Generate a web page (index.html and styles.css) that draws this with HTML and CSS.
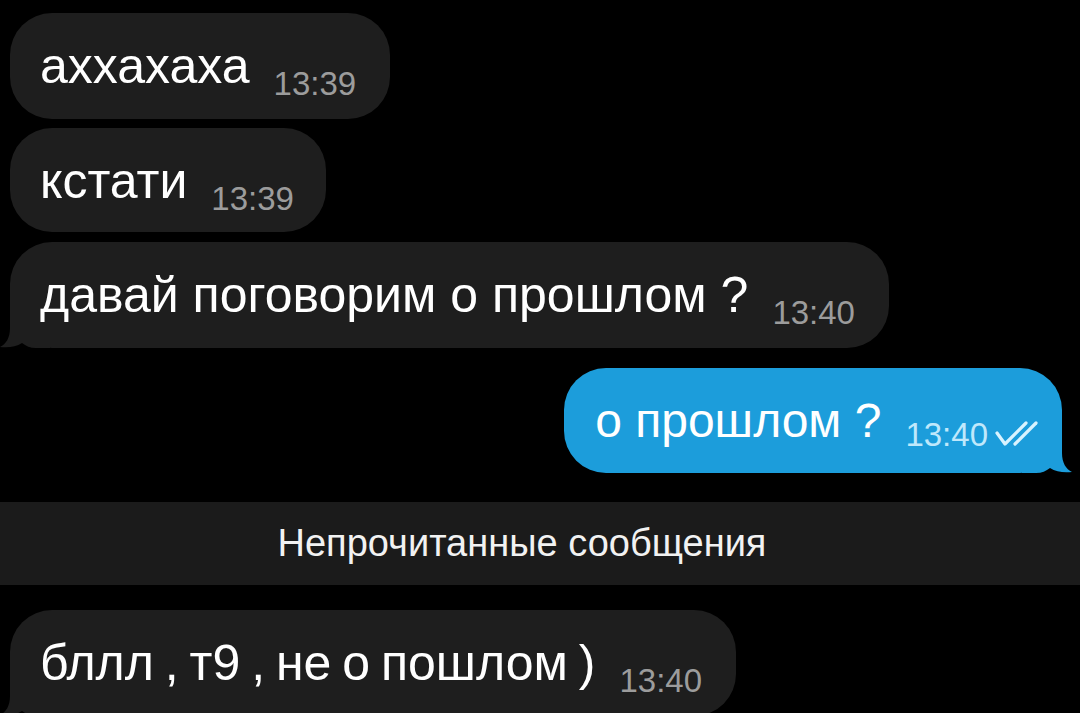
FILE: index.html
```html
<!DOCTYPE html>
<html lang="ru">
<head>
  <meta charset="UTF-8">
  <title>Чат</title>
  <link rel="stylesheet" href="styles.css">
</head>
<body>
  <div class="chat">
    <div class="msg in first">
      <div class="bubble">аххахаха<span class="time">13:39</span></div>
    </div>

    <div class="msg in second">
      <div class="bubble">кстати<span class="time">13:39</span></div>
    </div>

    <div class="msg in third">
      <div class="bubble">давай поговорим о прошлом ?<span class="time">13:40</span>
        <svg class="tail" width="50" height="50" viewBox="0 0 50 50"><path d="M10 0 L50 0 L50 50 L36 50 C30 50 26 48 22 45 C16 49 8 50 0 49 C6 46 10 40 10 30 Z"/></svg>
      </div>
    </div>

    <div class="msg out">
      <div class="bubble">о прошлом ?<span class="time">13:40</span><svg class="checks" width="44" height="26" viewBox="0 0 44 26"><path d="M2 12 L10 23 L31 2"/><path d="M20 23 L41 2"/></svg>
        <svg class="tail" width="50" height="50" viewBox="0 0 50 50"><path d="M10 0 L50 0 L50 50 L36 50 C30 50 26 48 22 45 C16 49 8 50 0 49 C6 46 10 40 10 30 Z"/></svg>
      </div>
    </div>

    <div class="unread">Непрочитанные сообщения</div>

    <div class="msg in last">
      <div class="bubble">бллл , т9 , не о пошлом )<span class="time">13:40</span>
        <svg class="tail" width="50" height="50" viewBox="0 0 50 50"><path d="M10 0 L50 0 L50 50 L36 50 C30 50 26 48 22 45 C16 49 8 50 0 49 C6 46 10 40 10 30 Z"/></svg>
      </div>
    </div>
  </div>
</body>
</html>
```

FILE: styles.css
```css
:root {
  --bubble-in: #1e1e1e;
  --bubble-out: #1c9ddb;
  --band: #1b1b1b;
}

body {
  margin: 0;
  background: #000;
  color: #fff;
  font-family: "Liberation Sans", Arial, sans-serif;
  overflow: hidden;
}

.chat {
  display: flex;
  flex-direction: column;
  padding-top: 13px;
}

.msg {
  display: flex;
  padding: 0 10px;
}

.msg.in {
  justify-content: flex-start;
}

.msg.out {
  justify-content: flex-end;
  padding-right: 18px;
  margin-top: 20px;
}

.second { margin-top: 9px; }
.third { margin-top: 10px; }
.last { margin-top: 25px; }

.bubble {
  position: relative;
  z-index: 0;
  height: 106px;
  padding: 0 34px 0 30px;
  border-radius: 42px;
  background: var(--bubble-in);
  font-size: 50px;
  line-height: 106px;
  white-space: nowrap;
}

.second .bubble {
  height: 104px;
  padding-right: 32px;
}

.last .bubble {
  word-spacing: -3px;
}

.time {
  margin-left: 24px;
  font-size: 33px;
  color: #9c9c9c;
  vertical-align: -12px;
  word-spacing: 0;
}

/* tail sits under the text, over the bubble fill */
.tail {
  position: absolute;
  z-index: -1;
  left: -10px;
  bottom: 0;
  fill: var(--bubble-in);
}

/* outgoing */
.out .bubble {
  height: 105px;
  padding: 10px 23px 0 31px;
  box-sizing: border-box;
  font-size: 48px;
  line-height: 86px;
  background: var(--bubble-out);
}

.out .time {
  color: #bfe8fb;
  vertical-align: -9px;
}

.out .tail {
  left: auto;
  right: -10px;
  transform: scaleX(-1);
  fill: var(--bubble-out);
}

.checks {
  margin-left: 7px;
  vertical-align: -10px;
  fill: none;
  stroke: #d8f3ff;
  stroke-width: 3.2;
  stroke-linecap: round;
  stroke-linejoin: round;
}

.unread {
  margin-top: 29px;
  height: 83px;
  padding-right: 36px;
  background: var(--band);
  text-align: center;
  font-size: 38px;
  line-height: 83px;
  color: #f2f2f2;
}
```
